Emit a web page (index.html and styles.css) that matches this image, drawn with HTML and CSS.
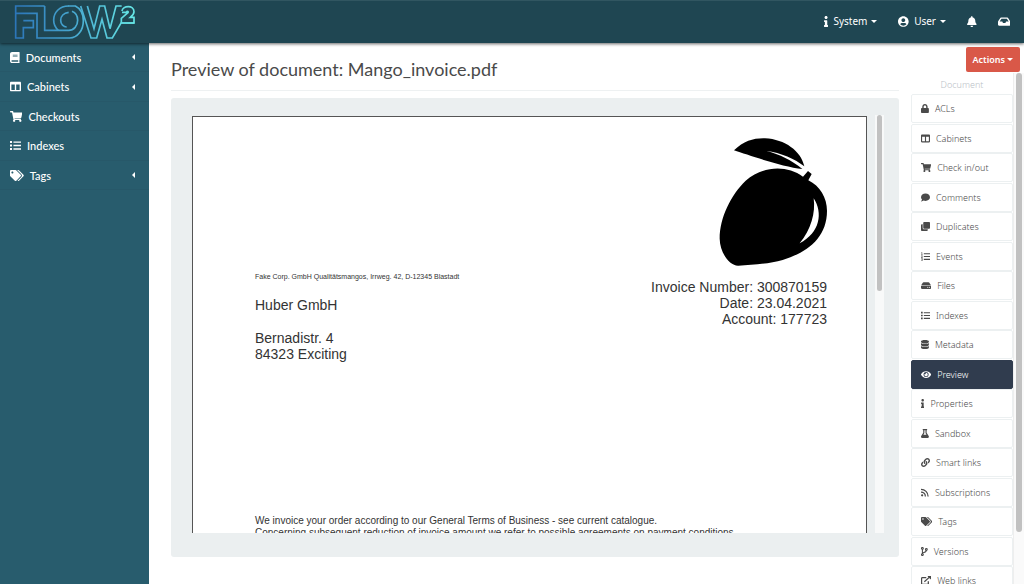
FILE: index.html
```html
<!DOCTYPE html>
<html lang="en">
<head>
<meta charset="utf-8">
<title>Preview of document: Mango_invoice.pdf</title>
<link rel="stylesheet" href="styles.css">
</head>
<body>
<svg class="defs" aria-hidden="true">
  <defs>
    <path id="columns" d="M464 32H48C21.49 32 0 53.49 0 80v352c0 26.51 21.49 48 48 48h416c26.51 0 48-21.49 48-48V80c0-26.51-21.49-48-48-48zM224 416H64V160h160v256zm224 0H288V160h160v256z"/>
    <path id="cart" d="M528.12 301.319l47.273-208C578.806 78.301 567.391 64 551.99 64H159.208l-9.166-44.81C147.758 8.021 137.93 0 126.529 0H24C10.745 0 0 10.745 0 24v16c0 13.255 10.745 24 24 24h69.883l70.248 343.435C147.325 417.1 136 435.222 136 456c0 30.928 25.072 56 56 56s56-25.072 56-56c0-15.674-6.447-29.835-16.824-40h209.647C430.447 426.165 424 440.326 424 456c0 30.928 25.072 56 56 56s56-25.072 56-56c0-22.172-12.888-41.332-31.579-50.405l5.517-24.276c3.413-15.018-8.002-29.319-23.403-29.319H218.117l-6.545-32h293.145c11.206 0 20.92-7.754 23.403-18.681z"/>
    <path id="list" d="M0 48h96v96H0zM0 208h96v96H0zM0 368h96v96H0zM160 64h352v64H160zM160 224h352v64H160zM160 384h352v64H160z"/>
    <path id="tags" d="M497.941 225.941L286.059 14.059A48 48 0 0 0 252.118 0H48C21.49 0 0 21.49 0 48v204.118a48 48 0 0 0 14.059 33.941l211.882 211.882c18.744 18.745 49.136 18.746 67.882 0l204.118-204.118c18.745-18.745 18.745-49.137 0-67.882zM112 160c-26.51 0-48-21.49-48-48s21.49-48 48-48 48 21.49 48 48-21.49 48-48 48zm513.941 133.823L421.823 497.941c-18.745 18.745-49.137 18.745-67.882 0l-.36-.36L527.64 323.522c16.999-16.999 26.36-39.6 26.36-63.64s-9.362-46.641-26.36-63.64L331.397 0h48.721a48 48 0 0 1 33.941 14.059l211.882 211.882c18.745 18.745 18.745 49.137 0 67.882z"/>
    <path id="info" d="M20 424.229h20V279.771H20c-11.046 0-20-8.954-20-20V212c0-11.046 8.954-20 20-20h112c11.046 0 20 8.954 20 20v212.229h20c11.046 0 20 8.954 20 20V492c0 11.046-8.954 20-20 20H20c-11.046 0-20-8.954-20-20v-47.771c0-11.046 8.954-20 20-20zM96 0C56.235 0 24 32.235 24 72s32.235 72 72 72 72-32.235 72-72S135.764 0 96 0z"/>
  </defs>
</svg>

<header class="topbar">
  <a class="brand" href="#" aria-label="FLOW2">
    <svg class="logo" viewBox="0 0 420 126" fill="none" stroke="url(#brandfade)" stroke-width="5">
      <defs>
        <linearGradient id="brandfade" gradientUnits="userSpaceOnUse" x1="40" y1="0" x2="400" y2="0">
          <stop offset="0" stop-color="#2b74b8"/><stop offset=".5" stop-color="#47a8d0"/><stop offset="1" stop-color="#66e6e6"/>
        </linearGradient>
      </defs>
      <path d="M134 15H47v96h23V80h30V59H70M47 37h64v74h98c24 0 41-24 41-52 0-20-8-36-24-44h-22"/>
      <path d="M134 15v73h72c16 0 27-14 27-30 0-13-7-23-17-27"/>
      <path d="M206 15c-28 0-45 20-45 42 0 12 5 23 14 31M206 34c-15 2-24 12-24 24s9 20 18 20"/>
      <path d="M242 15l31 96h17l16-56 15 56h16l26-45h40M262 15l20 68 17-68h15l16 68 18-68h17"/>
      <path d="M366 30c2-17 36-19 36 2 0 8-5 12-11 17h11v17h-38V52l19-16c4-4-1-7-4-2h-13"/>
    </svg>
  </a>
  <nav class="topnav">
    <button class="navlink" type="button"><svg class="icon" viewBox="0 0 192 512"><use href="#info"/></svg>System<span class="caret"></span></button>
    <button class="navlink" type="button"><svg class="icon" viewBox="0 0 496 512"><path d="M248 8C111 8 0 119 0 256s111 248 248 248 248-111 248-248S385 8 248 8zm0 96c48.6 0 88 39.4 88 88s-39.4 88-88 88-88-39.4-88-88 39.4-88 88-88zm0 344c-58.7 0-111.3-26.6-146.5-68.2 18.8-35.4 55.6-59.8 98.5-59.8 2.4 0 4.8.4 7.1 1.1 13 4.2 26.6 6.9 40.9 6.9 14.3 0 28-2.7 40.9-6.9 2.3-.7 4.7-1.1 7.1-1.1 42.9 0 79.7 24.4 98.5 59.8C359.3 421.4 306.7 448 248 448z"/></svg>User<span class="caret"></span></button>
    <a class="navlink" href="#" aria-label="Notifications"><svg class="icon" viewBox="0 0 448 512"><path d="M224 512c35.32 0 63.97-28.65 63.97-64H160.03c0 35.35 28.65 64 63.97 64zm215.39-149.71c-19.32-20.76-55.47-51.99-55.47-154.29 0-77.7-54.48-139.9-127.94-155.16V32c0-17.67-14.32-32-31.98-32s-31.98 14.33-31.98 32v20.84C118.56 68.1 64.08 130.3 64.08 208c0 102.3-36.15 133.53-55.47 154.29-6 6.45-8.66 14.16-8.61 21.71.11 16.4 12.98 32 32.1 32h383.8c19.12 0 32-15.6 32.1-32 .05-7.55-2.61-15.27-8.61-21.71z"/></svg></a>
    <a class="navlink" href="#" aria-label="Inbox"><svg class="icon" viewBox="0 0 576 512"><path d="M567.938 243.908L462.25 85.374A48.003 48.003 0 0 0 422.311 64H153.689a48 48 0 0 0-39.938 21.374L8.062 243.908A47.994 47.994 0 0 0 0 270.533V400c0 26.51 21.49 48 48 48h480c26.51 0 48-21.49 48-48V270.533a47.994 47.994 0 0 0-8.062-26.625zM162.252 128h251.497l85.333 128H376l-32 64H232l-32-64H76.918l85.334-128z"/></svg></a>
  </nav>
</header>

<div class="layout">
  <nav class="sidebar">
    <a class="side-item" href="#"><svg class="icon" viewBox="0 0 448 512"><path d="M448 360V24c0-13.3-10.7-24-24-24H96C43 0 0 43 0 96v320c0 53 43 96 96 96h328c13.3 0 24-10.7 24-24v-16c0-7.5-3.5-14.3-8.9-18.7-4.2-15.4-4.2-59.3 0-74.7 5.4-4.3 8.9-11.1 8.9-18.6zM128 134c0-3.3 2.7-6 6-6h212c3.3 0 6 2.7 6 6v20c0 3.3-2.7 6-6 6H134c-3.3 0-6-2.7-6-6v-20zm0 64c0-3.3 2.7-6 6-6h212c3.3 0 6 2.7 6 6v20c0 3.3-2.7 6-6 6H134c-3.3 0-6-2.7-6-6v-20zm253.4 250H96c-17.7 0-32-14.3-32-32 0-17.6 14.4-32 32-32h285.4c-1.9 17.1-1.9 46.9 0 64z"/></svg>Documents<span class="caret-left"></span></a>
    <a class="side-item" href="#"><svg class="icon" viewBox="0 0 512 512"><use href="#columns"/></svg>Cabinets<span class="caret-left"></span></a>
    <a class="side-item" href="#"><svg class="icon" viewBox="0 0 576 512"><use href="#cart"/></svg>Checkouts</a>
    <a class="side-item" href="#"><svg class="icon" viewBox="0 0 512 512"><use href="#list"/></svg>Indexes</a>
    <a class="side-item" href="#"><svg class="icon" viewBox="0 0 640 512"><use href="#tags"/></svg>Tags<span class="caret-left"></span></a>
  </nav>

  <main class="content">
    <h1 class="title">Preview of document: Mango_invoice.pdf</h1>
    <section class="well">
      <div class="viewer">
        <article class="sheet">
          <svg class="mango" viewBox="0 0 324 387">
            <path d="M45 37C75 8 105 0 138 1c60 3 108 38 118 84-28-22-70-41-114-46 40 10 76 28 108 54C190 86 90 52 45 37z"/>
            <path d="M252 116l15-17 11 9-10 19c35 17 56 53 56 91 0 82-60 125-133 148-40 12-90 14-133 17-26 1-55-38-56-81 0-64 34-131 78-174 52-44 122-48 172-12z"/>
            <path fill="#fff" d="M284 181c28 43 20 103-42 135 34-41 48-92 42-135z"/>
          </svg>
          <div class="parties">
            <div class="recipient">
              <p class="sender">Fake Corp. GmbH Qualitätsmangos, Irrweg. 42, D-12345 Blastadt</p>
              <p class="name">Huber GmbH</p>
              <p>Bernadistr. 4<br>84323 Exciting</p>
            </div>
            <p class="facts">Invoice Number: 300870159<br>Date: 23.04.2021<br>Account: 177723</p>
          </div>
          <p class="terms">We invoice your order according to our General Terms of Business - see current catalogue.<br>Concerning subsequent reduction of invoice amount we refer to possible agreements on payment conditions.</p>
        </article>
        <div class="track"><div class="thumb"></div></div>
      </div>
    </section>
  </main>

  <aside class="panel">
    <button class="actions" type="button">Actions<span class="caret"></span></button>
    <div class="panel-body">
      <div class="menu">
        <h2 class="menu-title">Document</h2>
        <a class="menu-item" href="#"><svg class="icon" viewBox="0 0 448 512"><path d="M400 224h-24v-72C376 68.2 307.8 0 224 0S72 68.2 72 152v72H48c-26.5 0-48 21.5-48 48v192c0 26.5 21.5 48 48 48h352c26.5 0 48-21.5 48-48V272c0-26.5-21.5-48-48-48zm-104 0H152v-72c0-39.7 32.3-72 72-72s72 32.3 72 72v72z"/></svg>ACLs</a>
        <a class="menu-item" href="#"><svg class="icon" viewBox="0 0 512 512"><use href="#columns"/></svg>Cabinets</a>
        <a class="menu-item" href="#"><svg class="icon" viewBox="0 0 576 512"><use href="#cart"/></svg>Check in/out</a>
        <a class="menu-item" href="#"><svg class="icon" viewBox="0 0 512 512"><path d="M256 32C114.6 32 0 125.1 0 240c0 49.6 21.4 95 57 130.7C44.5 421.1 2.7 466 2.2 466.5c-2.2 2.3-2.8 5.7-1.5 8.7S4.8 480 8 480c66.3 0 116-31.8 140.6-51.4 32.7 12.3 69 19.4 107.4 19.4 141.4 0 256-93.1 256-208S397.4 32 256 32z"/></svg>Comments</a>
        <a class="menu-item" href="#"><svg class="icon" viewBox="0 0 512 512"><path d="M464 0c26.51 0 48 21.49 48 48v288c0 26.51-21.49 48-48 48H176c-26.51 0-48-21.49-48-48V48c0-26.51 21.49-48 48-48h288M176 416c-44.112 0-80-35.888-80-80V128H48c-26.51 0-48 21.49-48 48v288c0 26.51 21.49 48 48 48h288c26.51 0 48-21.49 48-48v-48H176z"/></svg>Duplicates</a>
        <a class="menu-item" href="#"><svg class="icon" viewBox="0 0 512 512"><path d="M30 16h40v112h26v32H8v-32h26V56H14zM8 192h84v60l-42 38h46v32H4v-34l50-46v-18H8zM8 352h84v60l-12 10 14 14v60H4v-32h58v-24H30v-28l26-28H8zM160 64h352v64H160zM160 224h352v64H160zM160 384h352v64H160z"/></svg>Events</a>
        <a class="menu-item" href="#"><svg class="icon" viewBox="0 0 576 512"><path d="M576 304v96c0 26.51-21.49 48-48 48H48c-26.51 0-48-21.49-48-48v-96c0-26.51 21.49-48 48-48h480c26.51 0 48 21.49 48 48zm-48-80a79.557 79.557 0 0 1 30.777 6.165L462.25 85.374A48.003 48.003 0 0 0 422.311 64H153.689a48 48 0 0 0-39.938 21.374L17.223 230.165A79.557 79.557 0 0 1 48 224h480zm-48 96c-17.673 0-32 14.327-32 32s14.327 32 32 32 32-14.327 32-32-14.327-32-32-32zm-96 0c-17.673 0-32 14.327-32 32s14.327 32 32 32 32-14.327 32-32-14.327-32-32-32z"/></svg>Files</a>
        <a class="menu-item" href="#"><svg class="icon" viewBox="0 0 512 512"><use href="#list"/></svg>Indexes</a>
        <a class="menu-item" href="#"><svg class="icon" viewBox="0 0 448 512"><path d="M448 73.143v45.714C448 159.143 347.667 192 224 192S0 159.143 0 118.857V73.143C0 32.857 100.333 0 224 0s224 32.857 224 73.143zM448 176v102.857C448 319.143 347.667 352 224 352S0 319.143 0 278.857V176c48.125 33.143 136.208 48.572 224 48.572S399.874 209.143 448 176zm0 160v102.857C448 479.143 347.667 512 224 512S0 479.143 0 438.857V336c48.125 33.143 136.208 48.572 224 48.572S399.874 369.143 448 336z"/></svg>Metadata</a>
        <a class="menu-item active" href="#" aria-current="page"><svg class="icon" viewBox="0 0 576 512"><path d="M572.52 241.4C518.29 135.59 410.93 64 288 64S57.68 135.64 3.48 241.41a32.35 32.35 0 0 0 0 29.19C57.71 376.41 165.07 448 288 448s230.32-71.64 284.52-177.41a32.35 32.35 0 0 0 0-29.19zM288 400a144 144 0 1 1 144-144 143.93 143.93 0 0 1-144 144zm0-240a95.31 95.31 0 0 0-25.31 3.79 47.85 47.85 0 0 1-66.9 66.9A95.78 95.78 0 1 0 288 160z"/></svg>Preview</a>
        <a class="menu-item" href="#"><svg class="icon" viewBox="0 0 192 512"><use href="#info"/></svg>Properties</a>
        <a class="menu-item" href="#"><svg class="icon" viewBox="0 0 448 512"><path d="M437.2 403.5L320 215V64h8c13.3 0 24-10.7 24-24V24c0-13.3-10.7-24-24-24H120c-13.3 0-24 10.7-24 24v16c0 13.3 10.7 24 24 24h8v151L10.8 403.5C-18.5 450.6 15.3 512 70.9 512h306.2c55.7 0 89.4-61.5 60.1-108.5zM137.9 320l48.2-77.6c3.7-5.2 5.8-11.6 5.8-18.4V64h64v160c0 6.9 2.2 13.2 5.8 18.4l48.2 77.6h-172z"/></svg>Sandbox</a>
        <a class="menu-item" href="#"><svg class="icon" viewBox="0 0 512 512"><path d="M326.612 185.391c59.747 59.809 58.927 155.698.36 214.59-.11.12-.24.25-.36.37l-67.2 67.2c-59.27 59.27-155.699 59.262-214.96 0-59.27-59.26-59.27-155.7 0-214.96l37.106-37.106c9.84-9.84 26.786-3.3 27.294 10.606.648 17.722 3.826 35.527 9.69 52.721 1.986 5.822.567 12.262-3.783 16.612l-13.087 13.087c-28.026 28.026-28.905 73.66-1.155 101.96 28.024 28.579 74.086 28.749 102.325.51l67.2-67.19c28.191-28.191 28.073-73.757 0-101.83-3.701-3.694-7.429-6.564-10.341-8.569a16.037 16.037 0 0 1-6.947-12.606c-.396-10.567 3.348-21.456 11.698-29.806l21.054-21.055c5.521-5.521 14.182-6.199 20.584-1.731a152.482 152.482 0 0 1 20.522 17.197zM467.547 44.449c-59.261-59.262-155.69-59.27-214.96 0l-67.2 67.2c-.12.12-.25.25-.36.37-58.566 58.892-59.387 154.781.36 214.59a152.454 152.454 0 0 0 20.521 17.196c6.402 4.468 15.064 3.789 20.584-1.731l21.054-21.055c8.35-8.35 12.094-19.239 11.698-29.806a16.037 16.037 0 0 0-6.947-12.606c-2.912-2.005-6.64-4.875-10.341-8.569-28.073-28.073-28.191-73.639 0-101.83l67.2-67.19c28.239-28.239 74.3-28.069 102.325.51 27.75 28.3 26.872 73.934-1.155 101.96l-13.087 13.087c-4.35 4.35-5.769 10.79-3.783 16.612 5.864 17.194 9.042 34.999 9.69 52.721.509 13.906 17.454 20.446 27.294 10.606l37.106-37.106c59.271-59.259 59.271-155.699.001-214.959z"/></svg>Smart links</a>
        <a class="menu-item" href="#"><svg class="icon" viewBox="0 0 448 512"><circle cx="64" cy="416" r="64"/><path class="line" d="M0 74c224 0 404 180 404 404M0 230c138 0 248 110 248 248"/></svg>Subscriptions</a>
        <a class="menu-item" href="#"><svg class="icon" viewBox="0 0 640 512"><use href="#tags"/></svg>Tags</a>
        <a class="menu-item" href="#"><svg class="icon" viewBox="0 0 384 512"><path class="thin" d="M80 112v288M304 176c0 112-60 128-150 138-50 8-74 30-74 86"/><circle class="thin" cx="80" cy="80" r="52"/><circle class="thin" cx="80" cy="432" r="52"/><circle class="thin" cx="304" cy="144" r="52"/></svg>Versions</a>
        <a class="menu-item" href="#"><svg class="icon" viewBox="0 0 576 512"><path class="line" d="M300 96H76q-44 0-44 44v296q0 44 44 44h296q44 0 44-44V300M190 330L500 50"/><path d="M376 0h176q24 0 24 24v176l-60-40L400 60z"/></svg>Web links</a>
      </div>
      <div class="page-track"><div class="page-thumb"></div></div>
    </div>
  </aside>
</div>
</body>
</html>
```

FILE: styles.css
```css
* { box-sizing: border-box; }

body {
  margin: 0;
  height: 100vh;
  overflow: hidden;
  display: flex;
  flex-direction: column;
  background: #fff;
  color: #4a4a4a;
  font-family: Lato, sans-serif;
}

h1, h2, p { margin: 0; font-weight: 400; }
a { color: inherit; text-decoration: none; }
button { border: 0; background: none; color: inherit; font: inherit; cursor: pointer; }

.defs { position: absolute; width: 0; height: 0; }
.icon { height: 1em; width: auto; flex: none; fill: currentColor; }
.icon .line { fill: none; stroke: currentColor; stroke-width: 72; }
.icon .thin { fill: none; stroke: currentColor; stroke-width: 60; }

.caret {
  margin-left: 4px;
  border: 3px solid transparent;
  border-top-color: currentColor;
  border-bottom: 0;
}
.caret-left {
  margin-left: auto;
  border: 3px solid transparent;
  border-right-color: currentColor;
  border-left: 0;
}

/* Top bar */
.topbar {
  position: relative;
  z-index: 1;
  flex: none;
  display: flex;
  justify-content: space-between;
  height: 43px;
  background: #1f4652;
  border-top: 1px solid #315661;
  box-shadow: 0 1px 3px rgba(0, 0, 0, .6);
  color: #fff;
}
.brand { display: flex; }
.logo { width: 140px; height: 42px; }
.topnav {
  display: flex;
  align-items: center;
  gap: 21px;
  padding: 0 14px 2px 0;
  font-family: "Noto Sans", sans-serif;
  font-size: 10px;
}
.navlink { display: flex; align-items: center; padding: 0; }
.navlink .icon { height: 11px; }
button.navlink .icon { margin-right: 5px; }

/* Columns */
.layout { flex: 1; min-height: 0; display: flex; }

.sidebar {
  flex: none;
  width: 149px;
  background: #285c6d;
  color: #fff;
  font-size: 11px;
  font-weight: 500;
}
.side-item {
  display: flex;
  align-items: center;
  gap: 6px;
  height: 29px;
  padding: 0 14px 0 10px;
  border-bottom: 1px solid #275869;
}
.side-item:nth-child(even) { height: 30px; }

.content {
  flex: 1;
  min-width: 0;
  padding: 11px 12px 0 22px;
}
.title {
  margin-bottom: 7px;
  padding-bottom: 6px;
  border-bottom: 1px solid #eef1f2;
  font-size: 18px;
  line-height: 30px;
}
.well {
  padding: 17px 15px 24px 21px;
  border-radius: 3px;
  background: #ebeff0;
}
.viewer { display: flex; gap: 8px; height: 418px; overflow: hidden; }

/* Invoice sheet */
.sheet {
  flex: 1;
  height: 900px;
  margin-top: 1px;
  padding: 21px 39px 0 62px;
  border: 1px solid #555;
  background: #fff;
  color: #333;
  font-family: "Liberation Sans", Arial, sans-serif;
  font-size: 14px;
  line-height: 16px;
}
.mango { display: block; width: 108px; height: 129px; margin-left: auto; fill: #000; }
.parties { display: flex; justify-content: space-between; height: 248px; }
.sender { font-size: 7px; line-height: 20px; }
.name { margin: 10px 0 17px; }
.facts { margin-top: 12px; text-align: right; }
.terms { font-size: 10px; line-height: 12px; white-space: nowrap; }

.track { width: 9px; padding: 0 2px; background: #f8f9f9; }
.thumb { height: 176px; border-radius: 3px; background: #c1c1c1; }

/* Document menu */
.panel {
  flex: none;
  width: 113px;
  display: flex;
  flex-direction: column;
  font-family: "Noto Sans", sans-serif;
  font-size: 9px;
}
.actions {
  flex: none;
  display: flex;
  align-items: center;
  align-self: flex-end;
  height: 25px;
  margin: 4px 4px 1px 0;
  padding: 0 7px;
  border-radius: 2px;
  background: #d95848;
  color: #fff;
  font-weight: 600;
}
.actions .caret { margin-left: 2px; }
.panel-body { flex: 1; min-height: 0; display: flex; overflow: hidden; }
.menu { flex: 1; }
.menu-title {
  padding: 6px 0 3px;
  color: #b9c0c6;
  font-size: 9px;
  font-weight: 300;
  line-height: 12px;
  text-align: center;
}
.menu-item {
  display: flex;
  align-items: center;
  gap: 6px;
  height: 29px;
  margin-bottom: 1px;
  padding: 0 9px;
  border: 1px solid #ecf0f1;
  border-radius: 2px;
  color: #4a4a4a;
  font-weight: 300;
}
.menu-item:nth-child(odd) { margin-bottom: 0; }
.menu-item.active { border-color: #303c4e; background: #303c4e; color: #fff; }
.page-track { width: 11px; padding: 0 2px; border-left: 1px solid #eee; background: #fafafa; }
.page-thumb { height: 459px; border-radius: 4px; background: #c1c1c1; }
```
